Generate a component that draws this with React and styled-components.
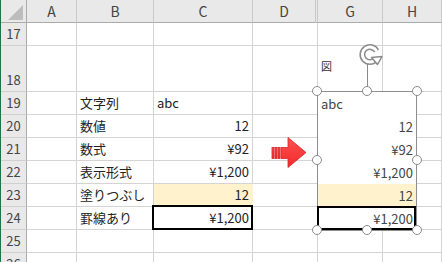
import styled, { createGlobalStyle } from "styled-components";

const GlobalStyle = createGlobalStyle`
  html, body {
    margin: 0;
    padding: 0;
    height: 262px;
    overflow: hidden;
    background: #fff;
  }
  body {
    font-family: "Noto Sans CJK JP", "Noto Sans", sans-serif;
  }
`;

// row header | A | B | C | D | hidden E:F | G | H
const COLS = "26px 50px 77px 99px 63px 2px 65px 1fr";

const Sheet = styled.div`
  position: relative;
  border-left: 1px solid #217346;
  height: 262px;
  overflow: hidden;
`;

const Row = styled.div`
  display: grid;
  grid-template-columns: ${COLS};
  height: ${(p) => p.$h}px;
`;

const HeadCell = styled.div`
  box-sizing: border-box;
  background: #e9e9e9;
  border-right: 1px solid ${(p) => (p.$corner ? "#ababab" : "#c9c9c9")};
  border-bottom: 1px solid #ababab;
  display: flex;
  align-items: center;
  justify-content: center;
  font-size: 14px;
  color: #444;
  position: relative;
`;

const Corner = styled.svg`
  position: absolute;
  right: 3px;
  bottom: 2px;
`;

const RowNum = styled.div`
  box-sizing: border-box;
  background: #e9e9e9;
  border-right: 1px solid #ababab;
  border-bottom: 1px solid #d0d0d0;
  display: flex;
  align-items: flex-end;
  justify-content: center;
  padding-bottom: 3px;
  font-size: 13px;
  line-height: 16px;
  color: #444;
`;

const Cell = styled.div`
  box-sizing: border-box;
  position: relative;
  grid-column: span ${(p) => p.$span || 1};
  border-right: 1px solid ${(p) => (p.$fill ? p.$fill : "#d4d4d4")};
  border-bottom: 1px solid ${(p) => (p.$fill ? p.$fill : "#d4d4d4")};
  background: ${(p) => p.$fill || "#fff"};
  display: flex;
  align-items: flex-end;
  justify-content: ${(p) => (p.$right ? "flex-end" : "flex-start")};
  padding: 0 3px 3px;
  font-size: 13px;
  line-height: 16px;
  color: #222;
  white-space: nowrap;

  ${(p) =>
    p.$boxed &&
    `
    &::after {
      content: "";
      position: absolute;
      top: -2px;
      left: -2px;
      right: -1px;
      bottom: -1px;
      border: 2px solid #000;
    }
  `}
`;

const Picture = styled.div`
  position: absolute;
  left: 316px;
  top: 91px;
  width: 100px;
  height: 140px;
  box-sizing: border-box;
  border: 1px solid #8e8e8e;
  background: #fff;
  display: flex;
  flex-direction: column;
`;

const PicRow = styled.div`
  position: relative;
  height: 23px;
  flex: none;
  display: flex;
  align-items: flex-end;
  justify-content: ${(p) => (p.$right ? "flex-end" : "flex-start")};
  padding: 0 3px 3px 3px;
  box-sizing: border-box;
  background: ${(p) => p.$fill || "transparent"};
  font-size: 13px;
  line-height: 16px;
  color: #444;
  white-space: nowrap;

  ${(p) =>
    p.$boxed &&
    `
    &::after {
      content: "";
      position: absolute;
      top: -1px;
      left: -1px;
      right: 0;
      bottom: 0;
      border: 2px solid #000;
    }
  `}
`;

const Handle = styled.div`
  position: absolute;
  left: ${(p) => p.$x - 5}px;
  top: ${(p) => p.$y - 5}px;
  width: 10px;
  height: 10px;
  box-sizing: border-box;
  border-radius: 50%;
  border: 1.5px solid #8a8a8a;
  background: #fff;
`;

const Stem = styled.div`
  position: absolute;
  left: 366px;
  top: 63px;
  width: 1px;
  height: 24px;
  background: #8a8a8a;
`;

const Rotate = styled.svg`
  position: absolute;
  left: 355px;
  top: 43px;
`;

const Label = styled.div`
  position: absolute;
  left: 320px;
  top: 59px;
  font-size: 11px;
  line-height: 14px;
  color: #333;
`;

const Arrow = styled.svg`
  position: absolute;
  left: 269px;
  top: 136px;
`;

const letters = [
  ["", true],
  ["A"],
  ["B"],
  ["C"],
  ["D"],
  [""],
  ["G"],
  ["H"],
];

const rows = [
  { n: 17, h: 23 },
  { n: 18, h: 46 },
  { n: 19, b: "文字列", c: "abc", left: true },
  { n: 20, b: "数値", c: "12" },
  { n: 21, b: "数式", c: "¥92" },
  { n: 22, b: "表示形式", c: "¥1,200" },
  { n: 23, b: "塗りつぶし", c: "12", fill: "#fff2cc" },
  { n: 24, b: "罫線あり", c: "¥1,200", boxed: true },
  { n: 25 },
  { n: 26 },
];

const pic = [
  { t: "abc", left: true },
  { t: "12" },
  { t: "¥92" },
  { t: "¥1,200" },
  { t: "12", fill: "#fff2cc" },
  { t: "¥1,200", boxed: true },
];

const handles = [
  [316, 91],
  [366, 91],
  [416, 91],
  [316, 160],
  [416, 160],
  [316, 230],
  [366, 230],
  [416, 230],
];

// rotation ring: open circle with the arrow head at its lower right
const RING = "M19.5 16.5 A7.5 7.5 0 1 1 20.5 8";

export default function App() {
  return (
    <>
      <GlobalStyle />
      <Sheet>
        <Row $h={23}>
          {letters.map(([l, corner], i) => (
            <HeadCell key={i} $corner={corner}>
              {corner && (
                <Corner width="15" height="15" viewBox="0 0 15 15">
                  <polygon points="15,0 15,15 0,15" fill="#bdbdbd" />
                </Corner>
              )}
              {l}
            </HeadCell>
          ))}
        </Row>

        {rows.map((r) => (
          <Row key={r.n} $h={r.h || 23}>
            <RowNum>{r.n}</RowNum>
            <Cell />
            <Cell>{r.b}</Cell>
            <Cell $right={!r.left} $fill={r.fill} $boxed={r.boxed}>
              {r.c}
            </Cell>
            <Cell $span={2} />
            <Cell />
            <Cell />
          </Row>
        ))}

        <Arrow width="38" height="34" viewBox="0 0 38 34">
          <defs>
            <linearGradient id="red" x1="0" y1="0" x2="0" y2="1">
              <stop offset="0" stopColor="#ff5050" />
              <stop offset="1" stopColor="#f02a2a" />
            </linearGradient>
          </defs>
          <g fill="url(#red)" stroke="#d8232a" strokeWidth="0.8">
            <rect x="2" y="11.5" width="2" height="11" />
            <rect x="5" y="11.5" width="2" height="11" />
            <rect x="8" y="11.5" width="2" height="11" />
            <polygon points="11,11.5 18,11.5 18,1.5 36,16.5 18,31.5 18,22.5 11,22.5" />
          </g>
        </Arrow>

        <Label>図</Label>
        <Stem />
        <Rotate width="28" height="24" viewBox="0 0 28 24">
          <path d={RING} fill="none" stroke="#8a8a8a" strokeWidth="6" />
          <path d={RING} fill="none" stroke="#fff" strokeWidth="3" />
          <polygon
            points="15.5,14.5 26,13.5 21.5,21.5"
            fill="#fff"
            stroke="#8a8a8a"
            strokeWidth="1.5"
            strokeLinejoin="round"
          />
        </Rotate>

        <Picture>
          {pic.map((p, i) => (
            <PicRow key={i} $right={!p.left} $fill={p.fill} $boxed={p.boxed}>
              {p.t}
            </PicRow>
          ))}
        </Picture>

        {handles.map(([x, y], i) => (
          <Handle key={i} $x={x} $y={y} />
        ))}
      </Sheet>
    </>
  );
}
